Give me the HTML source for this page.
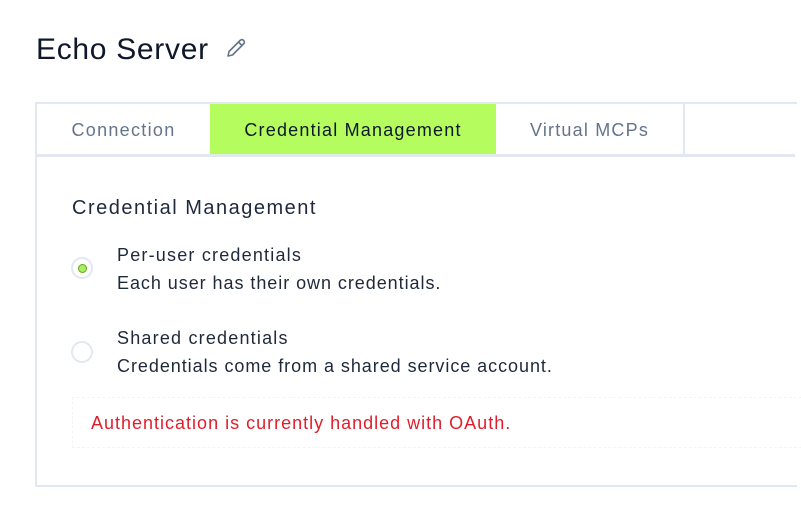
<!DOCTYPE html>
<html><head><style>
body{margin:0;width:801px;height:521px;background:#fff;font-family:"Liberation Sans",sans-serif;position:relative;overflow:hidden;color:#1e293b}
.a{position:absolute;white-space:nowrap}
</style></head><body>
<div class="a" style="left:36px;top:33px;font-size:30px;color:#0f172a;letter-spacing:0.7px">Echo Server</div>
<svg class="a" style="left:224px;top:36px" width="24" height="24" viewBox="0 0 24 24"><path d="M4 20 L5 15.5 L16 4.5 Q18 2.8 19.6 4.4 Q21.2 6 19.5 8 L8.5 19 Z M14.5 6 L18 9.5" fill="none" stroke="#64748b" stroke-width="1.6" stroke-linejoin="round"/></svg>
<div class="a" style="left:35px;top:102px;width:760px;height:381px;border:2px solid #e2e8f0;border-right:none;box-sizing:content-box"></div>
<div class="a" style="left:37px;top:104px;width:758px;height:50px;border-bottom:3px solid #e2e8f0"></div>
<div class="a" style="left:37px;top:104px;width:173px;height:50px;line-height:52px;text-align:center;font-size:18px;color:#64748b;border-right:2px solid #e2e8f0;letter-spacing:1.3px">Connection</div>
<div class="a" style="left:210px;top:104px;width:286px;height:50px;line-height:52px;text-align:center;font-size:18px;color:#0f172a;background:#b5fc5f;letter-spacing:1.2px">Credential Management</div>
<div class="a" style="left:496px;top:104px;width:187px;height:50px;line-height:52px;text-align:center;font-size:18px;color:#64748b;border-right:2px solid #e2e8f0;letter-spacing:1.2px">Virtual MCPs</div>
<div class="a" style="left:72px;top:197px;font-size:20px;color:#1e293b;letter-spacing:1.5px">Credential Management</div>
<div class="a" style="left:71px;top:257px;width:22px;height:22px;border:2px solid #e2e8f0;border-radius:50%;box-sizing:border-box"></div>
<div class="a" style="left:77.5px;top:263.5px;width:9px;height:9px;background:#a3f060;border:1px solid #65a30d;border-radius:50%;box-sizing:border-box"></div>
<div class="a" style="left:117px;top:245px;font-size:18px;color:#1e293b;letter-spacing:1.2px">Per-user credentials</div>
<div class="a" style="left:117px;top:273px;font-size:18px;color:#1e293b;letter-spacing:0.95px">Each user has their own credentials.</div>
<div class="a" style="left:71px;top:341px;width:22px;height:22px;border:2px solid #e2e8f0;border-radius:50%;box-sizing:border-box"></div>
<div class="a" style="left:117px;top:328px;font-size:18px;color:#1e293b;letter-spacing:1.2px">Shared credentials</div>
<div class="a" style="left:117px;top:356px;font-size:18px;color:#1e293b;letter-spacing:0.95px">Credentials come from a shared service account.</div>
<div class="a" style="left:72px;top:397px;width:740px;height:51px;border:1px dashed #f1f5f9;box-sizing:border-box"></div>
<div class="a" style="left:91px;top:413px;font-size:18px;color:#e11d2a;letter-spacing:1px">Authentication is currently handled with OAuth.</div>
</body></html>
